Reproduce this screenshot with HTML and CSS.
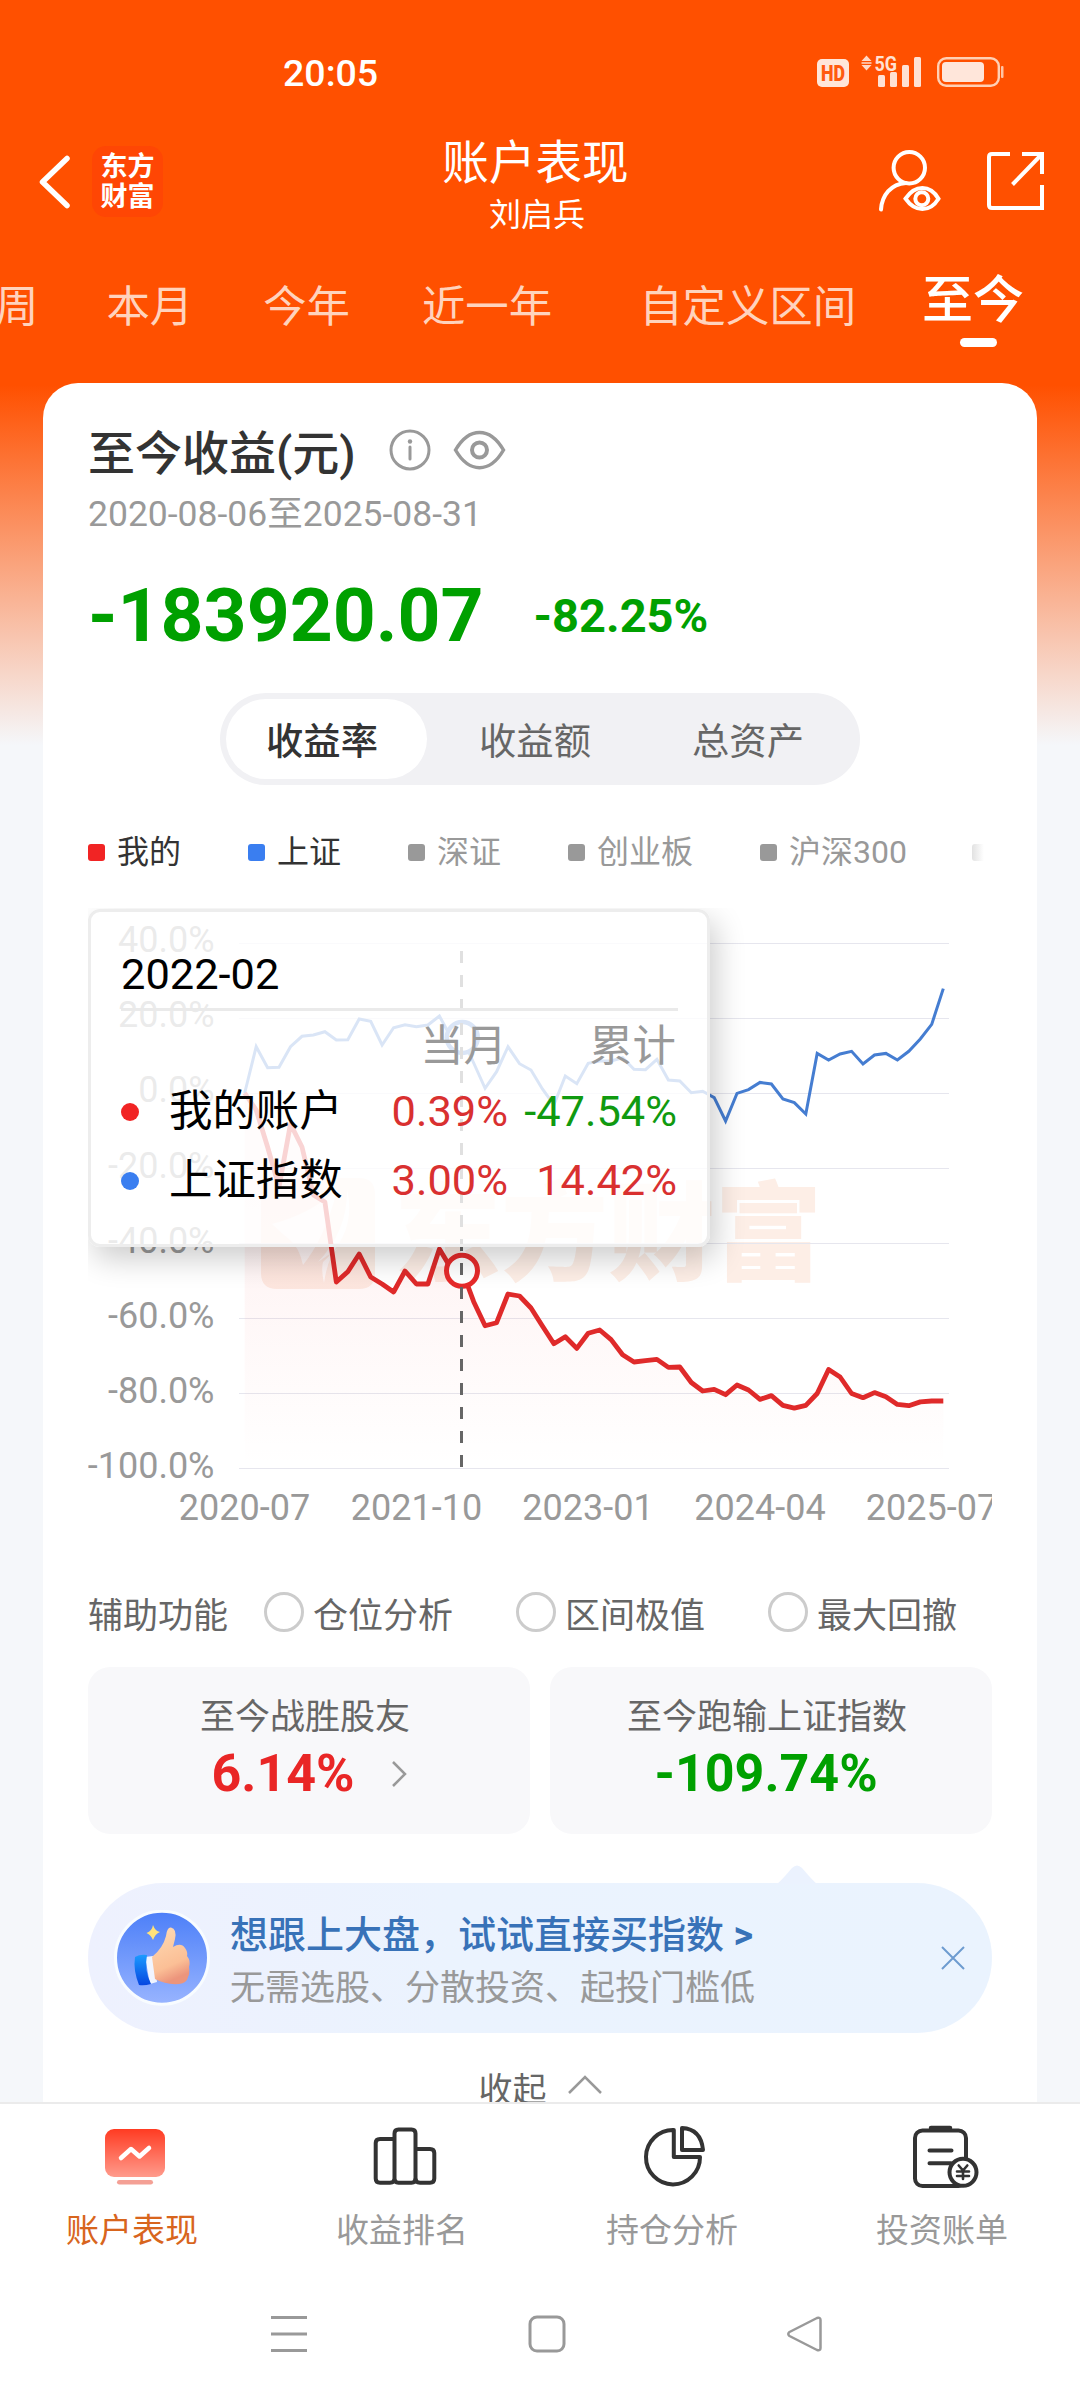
FILE: index.html
```
<!DOCTYPE html>
<html lang="zh-CN">
<head>
<meta charset="utf-8">
<title>账户表现</title>
<link rel="stylesheet" href="styles.css">
</head>
<body>
<div class="screen">
  <div class="statusbar">
    <span class="clock">20:05</span>
    <svg class="status-icons" width="190" height="44" viewBox="812 50 190 44">
      <rect x="817" y="59" width="32" height="28" rx="5" fill="#ffe6da"/>
      <text x="821" y="81" textLength="24" lengthAdjust="spacingAndGlyphs" class="hd">HD</text>
      <path d="M866.500 55.500l5 5.500h-10zM866.500 70.500l5-5.500h-10z" fill="#ffd9c7"/>
      <path d="M861.500 63h10" stroke="#ffd9c7" stroke-width="1.500"/>
      <text x="874.500" y="70.500" textLength="22.500" lengthAdjust="spacingAndGlyphs" class="net">5G</text>
      <g fill="#ffe1d3"><rect x="878" y="75" width="7" height="12" rx="1.500"/><rect x="890" y="72" width="7" height="15" rx="1.500"/><rect x="902" y="65" width="7" height="22" rx="1.500"/><rect x="914" y="57" width="7" height="30" rx="1.500"/></g>
      <rect x="938.200" y="58.200" width="60.600" height="27.600" rx="8" fill="none" stroke="#ffd0b5" stroke-width="2.400"/>
      <rect x="942" y="62" width="42" height="20" rx="4" fill="#ffe6da"/>
      <rect x="1001" y="66" width="2.500" height="12" rx="1" fill="#ffc4a4"/>
    </svg>
  </div>

  <header class="header">
    <div class="header-left">
      <svg width="34" height="60" viewBox="38 152 34 60"><path d="M67 158.500L42.500 182L67 205.500" fill="none" stroke="#fff" stroke-width="5.500" stroke-linecap="round" stroke-linejoin="round"/></svg>
      <div class="brand"><span>东方</span><span>财富</span></div>
    </div>
    <div class="header-title"><h1>账户表现</h1><p>刘启兵</p></div>
    <svg class="header-right" width="170" height="70" viewBox="876 146 170 70">
      <g fill="none" stroke="#fff" stroke-width="4">
        <circle cx="909.300" cy="167.700" r="15.700"/>
        <path d="M881 209.500C882 195 891 184 906 183" stroke-linecap="round"/>
        <path d="M905.500 198.700C915 184.500 930 184.500 938.500 198.700C930 212.500 915 212.500 905.500 198.700Z"/>
        <circle cx="921.800" cy="198.700" r="6.500"/>
        <path d="M1010 154H992Q989 154 989 157V205Q989 208 992 208H1042V185M1022 154H1042V174M1042 154L1012.500 184.500"/>
      </g>
    </svg>
  </header>

  <nav class="tabs">
    <span class="tab t-week">周</span><span class="tab t-month">本月</span><span class="tab t-year">今年</span><span class="tab t-oneyear">近一年</span><span class="tab t-custom">自定义区间</span><span class="tab active">至今</span>
  </nav>

  <main class="card">
    <div class="title-row">
      <h2>至今收益(元)</h2>
      <svg height="46" viewBox="386 427 124 46" class="title-icons">
        <g fill="none" stroke="#999" stroke-width="3">
          <circle cx="409" cy="450" r="19"/>
          <path d="M409 447v12" stroke-linecap="round"/>
          <path d="M454.500 450C468 426.500 489 426.500 502.500 450C489 473.500 468 473.500 454.500 450Z" stroke-width="3.500"/>
          <circle cx="478.500" cy="450" r="7.500" stroke-width="4"/>
        </g>
        <circle cx="409" cy="441.500" r="2.200" fill="#999"/>
      </svg>
    </div>
    <p class="range">2020-08-06至2025-08-31</p>
    <div class="amount-row"><span class="amount">-183920.07</span><span class="rate">-82.25%</span></div>

    <div class="segment"><span class="seg on">收益率</span><span class="seg">收益额</span><span class="seg">总资产</span></div>

    <div class="legend">
      <span class="key mine">我的</span><span class="key sh">上证</span><span class="key">深证</span><span class="key wide">创业板</span><span class="key last">沪深300</span><span class="key faded"></span>
    </div>

    <section class="chart">
      <svg class="plot" width="904" height="622" viewBox="88 908 904 622">
        <defs>
          <linearGradient id="fade" gradientUnits="userSpaceOnUse" x1="0" y1="1093" x2="0" y2="1468"><stop offset="0" stop-color="#f52c2c" stop-opacity=".09"/><stop offset="1" stop-color="#f52c2c" stop-opacity="0"/></linearGradient>
        </defs>
        <g fill="#fdeee6">
          <path fill-rule="evenodd" d="M277 1178H359Q375 1178 375 1194V1273Q375 1289 359 1289H277Q261 1289 261 1273V1194Q261 1178 277 1178ZM272 1224Q310 1214 337 1190Q325 1238 303 1265Q299 1247 290 1240Q280 1232 272 1224ZM347 1189Q348 1230 318 1262Q330 1254 338 1248Q328 1256 324 1283Q321 1270 323 1262Q357 1232 347 1189Z"/>
          <text x="394" y="1272" class="watermark">东方财富</text>
        </g>
        <g stroke="#e6e6ee" stroke-width="1">
          <path d="M239 943.500H949M239 1018.500H949M239 1093.500H949M239 1168.500H949M239 1243.500H949M239 1318.500H949M239 1393.500H949M239 1468.500H949"/>
        </g>
        <path fill="url(#fade)" d="M244.700 1093L256.200 1110L267.600 1147L279 1187L290.500 1124L302 1147L313.400 1195L324.900 1202L336.300 1282L347.800 1271.700L359.200 1254L370.700 1277L382.100 1284L393.600 1292L405 1271L416.400 1284L427.900 1284L439.400 1249L450.800 1268L462.300 1271L473.700 1301.700L485.100 1325.700L496.600 1322.700L508 1294L519.500 1296L531 1308L542.400 1326L553.900 1343.700L565.300 1336.700L576.800 1348.400L588.200 1333.300L599.700 1330L611.100 1339.600L622.600 1354.700L634 1362L645.500 1360.600L656.900 1359.400L668.400 1367.400L679.800 1367L691.300 1382.500L702.700 1391L714.200 1389.300L725.600 1394.700L737 1385L748.500 1390L760 1399.400L771.400 1395.600L782.900 1405.300L794.300 1408.200L805.800 1405.300L817.200 1393.500L828.600 1369.500L840.100 1377L851.600 1393.500L863 1397.700L874.500 1392.600L885.900 1396.800L897.400 1404.400L908.800 1405.700L920.300 1401.900L931.700 1401L943.300 1401V1468H244.700Z"/>
        <path fill="none" stroke="#457dd1" stroke-width="3" d="M244.700 1093L256.200 1046.700L267.600 1067.700L279 1067.300L290.500 1046.700L302 1036.300L313.400 1035L324.900 1031.700L336.300 1040L347.800 1039.700L359.200 1019L370.700 1021.300L382.100 1045L393.600 1027.700L405 1024.700L416.400 1026.700L427.900 1025L439.400 1016L450.800 1037L462.300 1038L473.700 1063L485.100 1088.300L496.600 1071.700L508 1046.700L519.500 1063.700L531 1070L542.400 1089L553.900 1105L565.300 1076L576.800 1083.700L588.200 1063.300L599.700 1061L611.100 1061L622.600 1057.700L634 1069.300L645.500 1069.700L656.900 1059.300L668.400 1080L679.800 1081L691.300 1092.700L702.700 1091.300L714.200 1097.600L725.600 1121L737 1093.400L748.500 1089.600L760 1082.400L771.400 1084L782.900 1098.900L794.300 1102.600L805.800 1114L817.200 1053.400L828.600 1060L840.100 1054L851.600 1051.300L863 1064L874.500 1055L885.900 1053.400L897.400 1060L908.800 1051.300L920.300 1039L931.700 1024.400L943.300 988.600"/>
        <path fill="none" stroke="#df2a2a" stroke-width="4.800" d="M244.700 1093L256.200 1110L267.600 1147L279 1187L290.500 1124L302 1147L313.400 1195L324.900 1202L336.300 1282L347.800 1271.700L359.200 1254L370.700 1277L382.100 1284L393.600 1292L405 1271L416.400 1284L427.900 1284L439.400 1249L450.800 1268L462.300 1271L473.700 1301.700L485.100 1325.700L496.600 1322.700L508 1294L519.500 1296L531 1308L542.400 1326L553.900 1343.700L565.300 1336.700L576.800 1348.400L588.200 1333.300L599.700 1330L611.100 1339.600L622.600 1354.700L634 1362L645.500 1360.600L656.900 1359.400L668.400 1367.400L679.800 1367L691.300 1382.500L702.700 1391L714.200 1389.300L725.600 1394.700L737 1385L748.500 1390L760 1399.400L771.400 1395.600L782.900 1405.300L794.300 1408.200L805.800 1405.300L817.200 1393.500L828.600 1369.500L840.100 1377L851.600 1393.500L863 1397.700L874.500 1392.600L885.900 1396.800L897.400 1404.400L908.800 1405.700L920.300 1401.900L931.700 1401L943.300 1401" stroke-linejoin="round"/>
        <circle cx="462.300" cy="1037.500" r="15.500" fill="#fff" stroke="#457dd1" stroke-width="4.500"/>
        <circle cx="462" cy="1270.700" r="15.500" fill="#fff" stroke="#e62a2a" stroke-width="5"/>
        <path d="M461.500 951V1468" stroke="#666" stroke-width="3" stroke-dasharray="12 12"/>
        <g class="axis" text-anchor="end">
          <text x="214.500" y="952">40.0%</text><text x="214.500" y="1027">20.0%</text><text x="214.500" y="1102">0.0%</text><text x="214.500" y="1178">-20.0%</text><text x="214.500" y="1253">-40.0%</text><text x="214.500" y="1328">-60.0%</text><text x="214.500" y="1403">-80.0%</text><text x="214.500" y="1478">-100.0%</text>
        </g>
        <g class="axis" text-anchor="middle">
          <text x="244.500" y="1520">2020-07</text><text x="416.500" y="1520">2021-10</text><text x="588" y="1520">2023-01</text><text x="760" y="1520">2024-04</text><text x="931.500" y="1520">2025-07</text>
        </g>
      </svg>
      <div class="tooltip">
        <div class="tip-date">2022-02</div>
        <div class="tip-grid">
          <span></span><span class="head">当月</span><span class="head">累计</span>
          <span class="name red-dot">我的账户</span><span class="up">0.39%</span><span class="down">-47.54%</span>
          <span class="name blue-dot">上证指数</span><span class="up">3.00%</span><span class="up">14.42%</span>
        </div>
      </div>
    </section>

    <div class="aux"><span class="aux-title">辅助功能</span><span class="radio">仓位分析</span><span class="radio">区间极值</span><span class="radio">最大回撤</span></div>

    <div class="stats">
      <div class="stat"><p>至今战胜股友</p><div class="stat-value red">6.14%<svg class="more" width="17" height="28" viewBox="0 0 17 28"><path d="M2 2L14 14L2 26" fill="none" stroke="#999" stroke-width="2.500"/></svg></div></div>
      <div class="stat"><p>至今跑输上证指数</p><div class="stat-value green">-109.74%</div></div>
    </div>

    <div class="banner">
      <svg class="notch" width="40" height="20" viewBox="0 0 40 20"><path d="M0 20Q4 17 15 4Q20 -1 25 4Q36 17 40 20Z" fill="#ebf2fe"/></svg>
      <svg class="thumb" width="96" height="96" viewBox="114 1910 96 96">
        <defs>
          <linearGradient id="disc" x1="0" y1="0" x2="0" y2="1"><stop offset="0" stop-color="#4c7ff8"/><stop offset="1" stop-color="#98b4ff"/></linearGradient>
          <linearGradient id="skin" x1="0" y1="0" x2=".3" y2="1"><stop offset="0" stop-color="#ffdcb5"/><stop offset=".75" stop-color="#fbbf96"/><stop offset="1" stop-color="#ec957c"/></linearGradient>
          <linearGradient id="cuff" x1="0" y1="0" x2="0" y2="1"><stop offset="0" stop-color="#1b9bff"/><stop offset="1" stop-color="#0746e0"/></linearGradient>
        </defs>
        <circle cx="162" cy="1957.700" r="46.500" fill="url(#disc)" stroke="#f8fcff" stroke-width="3"/>
        <path d="M153 1925Q155 1931 160 1932Q155 1934 153 1940Q151 1935 146.500 1933Q152 1931 153 1925Z" fill="#ffe27a"/>
        <path d="M145 1957L153 1956L157 1982L150 1984Z" fill="#f1f5ff"/>
        <path d="M152 1957Q163 1948 166 1936Q167 1927 171 1927.500Q177 1929 175 1939L173 1947Q181 1942 185 1948Q188 1952 187 1956Q191 1961 189 1967Q190 1974 188 1977Q187 1983 179 1984Q166 1985 155 1979Z" fill="url(#skin)"/>
        <path d="M135 1957Q140 1954 147 1955Q144 1970 151 1984Q144 1986 139 1985Q133 1970 135 1957Z" fill="url(#cuff)"/>
      </svg>
      <div class="banner-text"><strong>想跟上大盘，试试直接买指数 <b>&gt;</b></strong><span>无需选股、分散投资、起投门槛低</span></div>
      <svg class="close" width="24" height="24" viewBox="0 0 24 24"><path d="M1 1L23 23M23 1L1 23" stroke="#6e9bd0" stroke-width="2"/></svg>
    </div>

    <div class="fold">收起<svg width="34" height="19" viewBox="0 0 34 19"><path d="M1 18L17 2L33 18" fill="none" stroke="#999" stroke-width="2.500"/></svg></div>
  </main>

  <nav class="bottom-nav">
    <div class="item current">
      <svg width="64" height="64" viewBox="103 2124 64 64"><defs><linearGradient id="tile" x1="0" y1="0" x2="0" y2="1"><stop offset="0" stop-color="#ff3b22"/><stop offset="1" stop-color="#ff9b8c"/></linearGradient></defs><rect x="105" y="2129" width="60" height="48" rx="9" fill="url(#tile)"/><rect x="117" y="2180" width="36" height="4.600" rx="2.300" fill="#f4a095"/><path d="M121 2158L131 2149L139.500 2156.500L149 2148" fill="none" stroke="#fff" stroke-width="4.500" stroke-linecap="round" stroke-linejoin="round"/></svg>
      <span>账户表现</span>
    </div>
    <div class="item">
      <svg width="64" height="64" viewBox="373 2124 64 64"><g fill="none" stroke="#333" stroke-width="4"><path d="M394.500 2139H380Q375.700 2139 375.700 2143V2178.500Q375.700 2182.700 380 2182.700H390Q394.500 2182.700 394.500 2178.500V2133.500Q394.500 2129.500 398.500 2129.500H411.500Q415.500 2129.500 415.500 2133.500V2178.500Q415.500 2182.700 411.500 2182.700H398.500Q394.500 2182.700 394.500 2178.500"/><path d="M415.500 2149H430Q434.300 2149 434.300 2153V2178.500Q434.300 2182.700 430 2182.700H420Q415.500 2182.700 415.500 2178.500"/></g></svg>
      <span>收益排名</span>
    </div>
    <div class="item">
      <svg width="64" height="64" viewBox="643 2124 64 64"><g fill="none" stroke="#333" stroke-width="4" stroke-linejoin="round"><path d="M673.800 2130A27 27.200 0 1 0 700 2157H673.800Z"/><path d="M682 2128Q701 2129 703 2150H682Z"/></g></svg>
      <span>持仓分析</span>
    </div>
    <div class="item">
      <svg width="68" height="64" viewBox="911 2124 68 64"><g fill="none" stroke="#333" stroke-width="4" stroke-linecap="round"><rect x="915" y="2130.500" width="51" height="55.500" rx="7.500"/><path d="M931 2128H950" stroke-width="4.500"/><path d="M929.500 2150.500H951.500M929.500 2163.200H951"/><circle cx="963" cy="2172.300" r="13.500" fill="#fff"/><path d="M958.700 2165.500L963 2170.500L967.300 2165.500M963 2170.500V2179M957 2171.500H969M957 2176H969" stroke-width="2.600"/></g></svg>
      <span>投资账单</span>
    </div>
  </nav>

  <div class="sysnav">
    <svg width="38" height="40" viewBox="0 0 38 40"><path d="M1 3.500H37M1 20H37M1 36.500H37" stroke="#999" stroke-width="3"/></svg>
    <svg width="38" height="40" viewBox="0 0 38 40"><rect x="2" y="3" width="34" height="34" rx="7" fill="none" stroke="#999" stroke-width="3"/></svg>
    <svg width="38" height="40" viewBox="0 0 38 40"><path d="M3.500 18L31 4Q34.500 3 34.500 6V34Q34.500 37 31 36L3.500 22Q1 20 3.500 18Z" fill="none" stroke="#999" stroke-width="2.500" stroke-linejoin="round"/></svg>
  </div>
</div>
</body>
</html>
```

FILE: styles.css
```
* { box-sizing: border-box; }
body, h1, h2, p { margin: 0; font-weight: 400; }
body { font-family: Roboto, "Noto Sans CJK SC", sans-serif; color: #333; }
svg { display: block; flex: none; }

.screen {
  width: 1080px; height: 2400px; overflow: hidden;
  display: flex; flex-direction: column;
  background: linear-gradient(#ff5000 0, #ff5000 385px, #f5f7fa 745px);
}

.statusbar { height: 120px; flex: none; display: flex; padding: 50px 76px 0 283px; justify-content: space-between; color: #fff; }
.clock { font-size: 37.5px; line-height: 46px; font-weight: 500; }
.status-icons { overflow: visible; margin-right: 2px; }
.hd { font: 900 22px Roboto, sans-serif; fill: #ff5a10; }
.net { font: 700 21px Roboto, sans-serif; fill: #ffe1d3; }

.header { height: 130px; flex: none; display: grid; grid-template-columns: 420px 1fr 420px; color: #fff; }
.header-left { display: flex; align-items: flex-start; padding: 26px 0 0 38px; gap: 20px; }
.header-left > svg { margin-top: 6px; }
.brand { width: 71px; height: 71px; border-radius: 14px; background: #ff4604; display: flex; flex-direction: column; align-items: center; justify-content: center; font-size: 27px; line-height: 30px; font-weight: 700; }
.header-title { text-align: center; padding: 15px 9px 0 0; }
.header-title h1 { font-size: 46.6px; line-height: 56px; }
.header-title p { font-size: 32px; line-height: 48px; padding-left: 3px; }
.header-right { justify-self: end; margin: 26px 34px 0 0; }

.tabs { height: 133px; flex: none; display: flex; align-items: flex-start; padding-top: 28px; color: #ffd3bd; font-size: 43.4px; line-height: 60px; white-space: nowrap; }
.t-week { margin: 0 68px 0 -5px; }
.t-month { margin-right: 70px; }
.t-year { margin-right: 72px; }
.t-oneyear { margin-right: 87px; }
.t-custom { margin-right: 66px; }
.tab.active { color: #fff; font-weight: 500; font-size: 51px; margin-top: -7px; display: flex; flex-direction: column; align-items: center; }
.tab.active::after { content: ""; width: 37px; height: 9px; border-radius: 5px; background: #fff; margin: 7px 0 0 11px; }

.card { flex: 1; min-height: 0; margin: 0 43px; padding: 41px 45px 0; border-radius: 35px 35px 0 0; background: #fff; overflow: hidden; }
.title-row { height: 60px; display: flex; align-items: center; }
h2 { font-size: 47px; line-height: 60px; font-weight: 500; }
.title-icons { width: 124px; margin: -8px 0 0 31px; }
.range { margin-top: 7px; font-size: 35.5px; line-height: 46px; color: #999; }
.amount-row { margin-top: 28px; height: 100px; display: flex; align-items: center; gap: 50px; color: #00a000; font-weight: 700; }
.amount { font-size: 75px; }
.rate { font-size: 47px; }

.segment { width: 640px; height: 92px; margin: 28px auto 0; padding: 6px; border-radius: 46px; background: #f1f1f4; display: grid; grid-template-columns: 201px 213px 213px; }
.seg { display: flex; align-items: center; justify-content: center; font-size: 37.3px; color: #666; padding-left: 3px; }
.seg.on { background: #fff; border-radius: 40px; color: #333; font-weight: 500; padding: 0 9px 0 0; }

.legend { margin-top: 44px; height: 46px; display: flex; font-size: 32px; line-height: 46px; color: #999; overflow: hidden; }
.key { width: 160px; flex: none; display: flex; align-items: center; gap: 12px; }
.key::before { content: ""; width: 17px; height: 17px; border-radius: 3px; background: #999; }
.key.wide { width: 192px; }
.key.last { width: 212px; }
.mine, .sh { color: #333; }
.mine::before { background: #f12424; }
.sh::before { background: #3a7ef0; }
.faded::before { background: linear-gradient(90deg, #e2e2e2, #fff 70%); }

.chart { position: relative; margin-top: 33px; height: 622px; overflow: hidden; }
.axis { font: 36px Roboto, sans-serif; fill: #999; }
.watermark { font: 900 107px "Noto Sans CJK SC", sans-serif; }
.tooltip { position: absolute; left: 0; top: 1px; width: 622px; height: 338px; padding: 33px 29px 0 30px; border: 3px solid #ededed; border-radius: 12px; background: rgba(255,255,255,.8); box-shadow: 6px 12px 30px rgba(0,0,0,.2); color: #000; font-size: 43.4px; }
.tip-date { height: 66px; line-height: 60px; border-bottom: 3px solid #eaeaea; }
.tip-grid { display: grid; grid-template-columns: 220px 167px 169px; grid-template-rows: 66px 69px 69px; align-items: center; text-align: right; line-height: 60px; }
.head { color: #999; padding: 5px 1px 0 0; }
.name { display: flex; align-items: center; gap: 30px; text-align: left; white-space: nowrap; }
.name::before { content: ""; width: 18px; height: 18px; border-radius: 50%; flex: none; }
.red-dot::before { background: #f12424; }
.blue-dot::before { background: #3a7ef0; }
.up { color: #d93030; }
.down { color: #109a10; }

.aux { margin-top: 52px; height: 60px; display: flex; align-items: center; font-size: 35px; color: #666; white-space: nowrap; }
.aux-title { width: 176px; flex: none; }
.radio { width: 252px; display: flex; align-items: center; gap: 9px; flex: none; }
.radio::before { content: ""; width: 34px; height: 34px; border: 3px solid #ccc; border-radius: 50%; }

.stats { margin-top: 25px; display: grid; grid-template-columns: 1fr 1fr; gap: 20px; }
.stat { height: 167px; border-radius: 22px; background: #f8f8fa; padding: 25px 8px 0 0; text-align: center; color: #666; font-size: 35px; line-height: 52px; }
.stat-value { display: flex; align-items: center; justify-content: center; font-size: 52px; line-height: 60px; font-weight: 700; }
.stat-value.red { color: #e92626; padding-left: 9px; }
.stat-value.green { color: #00a000; padding-right: 2px; }
.more { margin-left: 36px; }

.banner { position: relative; margin-top: 49px; height: 150px; border-radius: 75px; background: linear-gradient(90deg, #eef1fe, #ebf3fe 40%, #eaf3fe); display: flex; align-items: center; padding: 0 27px 0 26px; }
.notch { position: absolute; left: 689px; top: -19px; }
.banner-text { display: flex; flex-direction: column; margin: 10px 0 0 20px; flex: 1; }
.banner-text strong { font-size: 38px; line-height: 52px; font-weight: 500; color: #3872b8; }
.banner-text span { font-size: 35px; line-height: 56px; color: #999; }

.fold { margin-top: 27px; height: 60px; display: flex; align-items: center; justify-content: center; gap: 21px; font-size: 34px; line-height: 60px; color: #666; }
.fold svg { margin-top: -12px; }

.bottom-nav { height: 168px; flex: none; background: #fff; border-top: 2px solid #ebebeb; display: grid; grid-template-columns: repeat(4, 270px); }
.item { display: flex; flex-direction: column; align-items: center; padding-top: 20px; font-size: 33px; line-height: 50px; color: #999; }
.item span { margin: 18px 6px 0 0; }
.current { color: #d8651d; }

.sysnav { height: 130px; flex: none; background: #fff; display: flex; align-items: flex-start; gap: 220px; padding: 44px 0 0 270px; }
```
